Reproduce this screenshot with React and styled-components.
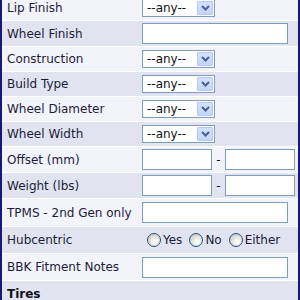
import React from "react";
import styled, { createGlobalStyle } from "styled-components";

const COLORS = {
  NAVY: "#16197a",
  LIGHT_ROW: "#f3f3fb",
  DARK_ROW: "#e1e4f0",
  TEXT: "#1c1c3a",
  FIELD_BORDER: "#7f9db9",
  ARROW_BG: "#c3d5fb",
  ARROW_BORDER: "#b3c8f2",
  ARROW: "#4b5f8a",
};

const GlobalStyle = createGlobalStyle`
  body {
    margin: 0;
    background: #ffffff;
    font-family: "DejaVu Sans", Verdana, sans-serif;
    overflow: hidden;
  }
`;

function Select() {
  return (
    <SelectBox>
      <SelectText>--any--</SelectText>
      <ArrowButton>
        <svg width="9" height="6" viewBox="0 0 9 6">
          <path d="M1 1 L4.5 4.5 L8 1" fill="none" stroke={COLORS.ARROW} strokeWidth="2" />
        </svg>
      </ArrowButton>
    </SelectBox>
  );
}

function Radio({ label }) {
  return (
    <RadioItem>
      <RadioDot />
      <span>{label}</span>
    </RadioItem>
  );
}

// height of each row, taken from the screenshot
const rows = [
  { label: "Lip Finish", field: "select", h: 24 },
  { label: "Wheel Finish", field: "text", h: 25 },
  { label: "Construction", field: "select", h: 24 },
  { label: "Build Type", field: "select", h: 24 },
  { label: "Wheel Diameter", field: "select", h: 24 },
  { label: "Wheel Width", field: "select", h: 24 },
  { label: "Offset (mm)", field: "range", h: 25 },
  { label: "Weight (lbs)", field: "range", h: 25 },
  { label: "TPMS - 2nd Gen only", field: "text", h: 27 },
  { label: "Hubcentric", field: "radio", h: 26 },
  { label: "BBK Fitment Notes", field: "text", h: 26 },
];

function Field({ type }) {
  if (type === "select") return <Select />;
  if (type === "text") return <TextInput />;
  if (type === "range")
    return (
      <RangeWrap>
        <SmallInput />
        <Dash>-</Dash>
        <SmallInput />
      </RangeWrap>
    );
  return (
    <RadioGroup>
      <Radio label="Yes" />
      <Radio label="No" />
      <Radio label="Either" />
    </RadioGroup>
  );
}

function App() {
  return (
    <>
      <GlobalStyle />
      <Panel>
        {rows.map((row, i) => (
          <Row key={row.label} $alt={i % 2 === 1} $h={row.h}>
            <Label>{row.label}</Label>
            <Cell>
              <Field type={row.field} />
            </Cell>
          </Row>
        ))}
        <HeaderRow>Tires</HeaderRow>
      </Panel>
    </>
  );
}

const Panel = styled.div`
  width: 296px;
  height: 304px;
  margin-top: -4px;
  border-left: 2px solid ${COLORS.NAVY};
  border-right: 2px solid ${COLORS.NAVY};
  display: flex;
  flex-direction: column;
  gap: 1px;
  background: #ffffff;
  overflow: hidden;
`;

const Row = styled.div`
  display: grid;
  grid-template-columns: 140px 1fr;
  align-items: center;
  flex-shrink: 0;
  height: ${(p) => p.$h}px;
  background: ${(p) => (p.$alt ? COLORS.DARK_ROW : COLORS.LIGHT_ROW)};
`;

const Label = styled.div`
  padding-left: 5px;
  font-size: 12px;
  color: ${COLORS.TEXT};
  white-space: nowrap;
`;

const Cell = styled.div`
  display: flex;
  align-items: center;
`;

const SelectBox = styled.div`
  box-sizing: border-box;
  width: 73px;
  height: 18px;
  border: 1px solid ${COLORS.FIELD_BORDER};
  background: #ffffff;
  display: flex;
  align-items: center;
  justify-content: space-between;
  padding: 1px;
`;

const SelectText = styled.span`
  font-size: 12px;
  color: #111111;
  padding-left: 3px;
`;

const ArrowButton = styled.div`
  box-sizing: border-box;
  width: 16px;
  height: 14px;
  border: 1px solid ${COLORS.ARROW_BORDER};
  background: linear-gradient(#d3e1fc, ${COLORS.ARROW_BG});
  border-radius: 1px;
  display: flex;
  align-items: center;
  justify-content: center;
`;

const TextInput = styled.div`
  box-sizing: border-box;
  width: 146px;
  height: 21px;
  border: 1px solid ${COLORS.FIELD_BORDER};
  background: #ffffff;
`;

const RangeWrap = styled.div`
  display: flex;
  align-items: center;
`;

const SmallInput = styled.div`
  box-sizing: border-box;
  width: 70px;
  height: 21px;
  border: 1px solid ${COLORS.FIELD_BORDER};
  background: #ffffff;
`;

const Dash = styled.span`
  width: 13px;
  text-align: center;
  font-size: 12px;
  color: #111111;
`;

const RadioGroup = styled.div`
  display: flex;
  align-items: center;
  padding-left: 5px;
  gap: 7px;
`;

const RadioItem = styled.label`
  display: flex;
  align-items: center;
  gap: 2px;
  font-size: 12px;
  color: ${COLORS.TEXT};
`;

const RadioDot = styled.span`
  box-sizing: border-box;
  width: 14px;
  height: 14px;
  border-radius: 50%;
  border: 1px solid #1d5281;
  background: radial-gradient(circle at 60% 65%, #ffffff 0%, #e6e6e0 45%, #bcbcb4 100%);
`;

const HeaderRow = styled.div`
  height: 26px;
  flex-shrink: 0;
  display: flex;
  align-items: center;
  padding-left: 5px;
  font-size: 12px;
  font-weight: bold;
  color: #101020;
  background: ${COLORS.DARK_ROW};
`;

export default App;
